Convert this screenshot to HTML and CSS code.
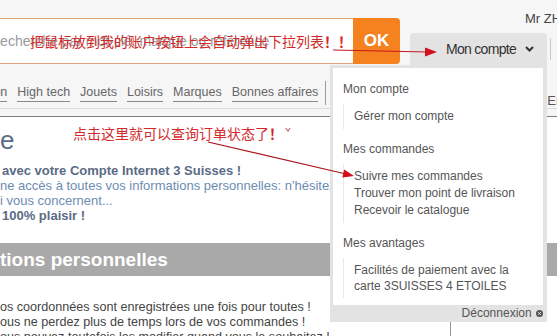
FILE: index.html
```html
<!DOCTYPE html>
<html lang="fr">
<head>
    <meta charset="UTF-8">
    <meta name="viewport" content="width=device-width, initial-scale=1.0">
    <title>Mon compte - 3 Suisses</title>
    <link rel="stylesheet" href="styles.css">
</head>
<body>
    <header class="top">
        <div class="top-row">
            <form class="search">
                <input type="text" class="search-input" placeholder="Recherche par mot-clé, marque ou référence">
                <button type="button" class="search-btn">OK</button>
            </form>

            <div class="account">
                <div class="greeting">Mr ZHANG</div>
                <div class="account-btn">
                    Mon compte
                    <svg class="chevron" width="9" height="6" viewBox="0 0 9 6"><polyline points="1,1 4.5,4.5 8,1" fill="none" stroke="#333" stroke-width="2"/></svg>
                </div>

                <div class="menu">
                    <div class="menu-body">
                        <div class="menu-title">Mon compte</div>
                        <div class="menu-group">
                            <a href="#">Gérer mon compte</a>
                        </div>

                        <div class="menu-title">Mes commandes</div>
                        <div class="menu-group">
                            <a href="#">Suivre mes commandes</a>
                            <a href="#">Trouver mon point de livraison</a>
                            <a href="#">Recevoir le catalogue</a>
                        </div>

                        <div class="menu-title">Mes avantages</div>
                        <div class="menu-group last">
                            <a href="#">Facilités de paiement avec la carte 3SUISSES 4 ETOILES</a>
                        </div>
                    </div>
                    <div class="menu-foot">Déconnexion <svg width="7" height="7" viewBox="0 0 8 8"><circle cx="4" cy="4" r="4" fill="#555"/><path d="M2.6 2.6 L5.4 5.4 M5.4 2.6 L2.6 5.4" stroke="#fff" stroke-width="1.1"/></svg></div>
                </div>
            </div>
            <div class="acc-sep"></div>
        </div>

        <nav class="cats">
            <a href="#">Maison</a>
            <a href="#">High tech</a>
            <a href="#">Jouets</a>
            <a href="#">Loisirs</a>
            <a href="#">Marques</a>
            <a href="#">Bonnes affaires</a>
            <span class="divider"></span>
            <span class="cats-aside">En ce moment</span>
        </nav>
    </header>
    <div class="strip"></div>

    <main class="content">
        <h1 class="welcome">e</h1>
        <div class="intro">
            <strong>avec votre Compte Internet 3 Suisses !</strong><br>
            <span class="soft">ne accès à toutes vos informations personnelles: n'hésitez pas à les consulter</span><br>
            <span class="soft">i vous concernent...</span><br>
            <strong>100% plaisir !</strong>
        </div>

        <h2 class="band">tions personnelles</h2>

        <div class="cols">
            <div class="text">
                os coordonnées sont enregistrées une fois pour toutes !<br>
                ous ne perdez plus de temps lors de vos commandes !<br>
                ous pouvez toutefois les modifier quand vous le souhaitez !
            </div>
            <div class="side-col"></div>
        </div>
    </main>

    <!-- notes added on the screenshot -->
    <div class="note note-1">把鼠标放到我的账户按钮上会自动弹出下拉列表<b>！！</b></div>
    <div class="note note-2">点击这里就可以查询订单状态了<b>！</b><span class="caret">ˇ</span></div>

    <svg class="arrows" width="557" height="336" viewBox="0 0 557 336">
        <line x1="333" y1="50" x2="428" y2="52" stroke="#c8161d" stroke-width="1.2"/>
        <polygon points="425,47.5 437,52 425,56.5" fill="#d0101a"/>
        <line x1="208" y1="142" x2="346" y2="174" stroke="#a8141a" stroke-width="1.2"/>
        <polygon points="344.2,169.4 354,176 342.3,177.6" fill="#d0101a"/>
    </svg>
</body>
</html>
```

FILE: styles.css
```css
body {
    margin: 0;
    width: 557px;
    height: 336px;
    overflow: hidden;
    position: relative;
    background: #fff;
    font-family: "Liberation Sans", Arial, sans-serif;
}

/* header */
.top {
    height: 108px;
    background: #f6f6f6;
    border-bottom: 1px solid #dcdcdc;
}

.top-row {
    display: flex;
    align-items: flex-start;
    padding-top: 11px;
    margin-left: -19px;
}

.search {
    display: flex;
    flex-shrink: 0;
    margin: 7px 0 0 0;
    height: 46px;
}

.search-input {
    width: 372px;
    box-sizing: border-box;
    border: 1px solid #e0a47c;
    border-right: none;
    padding: 0 0 0 8px;
    font-family: "Liberation Sans", Arial, sans-serif;
    font-size: 14px;
    background: #fff;
    outline: none;
}

.search-input::placeholder {
    color: #9a9a9a;
}

.search-btn {
    width: 47px;
    border: none;
    border-radius: 0 4px 4px 0;
    background: #f5821f;
    color: #fff;
    font-family: "Liberation Sans", Arial, sans-serif;
    font-weight: bold;
    font-size: 17px;
    padding: 0;
}

.account {
    position: relative;
    flex-shrink: 0;
    margin-left: 10px;
    display: flex;
    flex-direction: column;
}

.greeting {
    padding-left: 115px;
    font-size: 13px;
    line-height: 15px;
    color: #444;
    white-space: nowrap;
    width: 22px;
}

.account-btn {
    margin-top: 7px;
    width: 137px;
    height: 32px;
    box-sizing: border-box;
    padding-left: 36px;
    display: flex;
    align-items: center;
    background: #e3e3e3;
    border-radius: 4px 4px 0 0;
    font-size: 14px;
    letter-spacing: -0.7px;
    color: #333;
}

.chevron {
    margin-left: 9px;
}

.acc-sep {
    flex-shrink: 0;
    width: 1px;
    height: 22px;
    margin: 27px 0 0 3px;
    background: #c8c8c8;
}

/* dropdown */
.menu {
    position: absolute;
    top: 100%;
    right: 0;
    width: 217px;
    box-sizing: border-box;
    padding: 3px 4px 0 3px;
    background: #e3e3e3;
    z-index: 5;
}

.menu-body {
    background: #fff;
    padding: 13px 10px 7px 10px;
}

.menu-title {
    font-size: 12px;
    line-height: 17px;
    color: #555;
}

.menu-group {
    margin: 6px 0 12px 0;
    padding: 4px 0 4px 10px;
    border-left: 1px solid #e8e8e8;
}

.menu-group.last {
    margin-bottom: 0;
}

.menu-group a {
    display: block;
    font-size: 12px;
    line-height: 17px;
    color: #555;
    text-decoration: none;
}

.menu-group.last a {
    line-height: 16px;
}

.menu-foot {
    height: 17px;
    line-height: 16px;
    text-align: right;
    font-size: 12px;
    color: #555;
}

.menu-foot svg {
    margin-left: 1px;
}

/* categories */
.cats {
    display: flex;
    align-items: flex-start;
    margin: 20px 0 0 -33px;
}

.cats a {
    flex-shrink: 0;
    white-space: nowrap;
    font-size: 12.5px;
    line-height: 15px;
    color: #666;
    text-decoration: none;
    border-bottom: 1px solid #888;
    padding-bottom: 1px;
    margin-right: 10px;
}

.cats .divider {
    flex-shrink: 0;
    width: 1px;
    height: 24px;
    margin: -4px 0 0 -3px;
    background: #999;
}

.cats-aside {
    flex-shrink: 0;
    margin: 8px 0 0 221px;
    font-size: 13px;
    color: #555;
    white-space: nowrap;
}

.strip {
    height: 7px;
    background: #f6f6f6;
    border-bottom: 1px solid #7a7a7a;
}

/* content */
.welcome {
    margin: 8px 0 0 0;
    font-size: 26px;
    line-height: 30px;
    font-weight: normal;
    color: #5d6d88;
}

.intro {
    margin-top: 8px;
    font-size: 13px;
    line-height: 15px;
    white-space: nowrap;
}

.intro strong {
    color: #5b6b87;
    padding-left: 2px;
}

.intro .soft {
    color: #6d8bb2;
}

.band {
    margin: 20px 0 0 0;
    height: 33px;
    background: #a9a9a9;
    color: #fff;
    font-size: 19px;
    line-height: 33px;
    font-weight: bold;
}

.cols {
    display: flex;
}

.text {
    flex-shrink: 0;
    width: 450px;
    margin-top: 24px;
    font-size: 12.6px;
    line-height: 15px;
    color: #444;
    white-space: nowrap;
}

.side-col {
    flex: 1;
    margin-top: 44px;
    height: 30px;
    border-left: 1px solid #999;
}

/* annotations */
.note {
    position: absolute;
    z-index: 10;
    color: #d22a2a;
    font-family: "Noto Sans CJK SC", sans-serif;
    font-size: 14px;
    line-height: 20px;
    white-space: nowrap;
}

.note-1 {
    left: 30px;
    top: 31px;
}

.note-2 {
    left: 73px;
    top: 123px;
}

.caret {
    font-size: 10px;
    vertical-align: top;
    margin-left: 2px;
    color: #a33;
}

.arrows {
    position: absolute;
    top: 0;
    left: 0;
    z-index: 11;
}
```
